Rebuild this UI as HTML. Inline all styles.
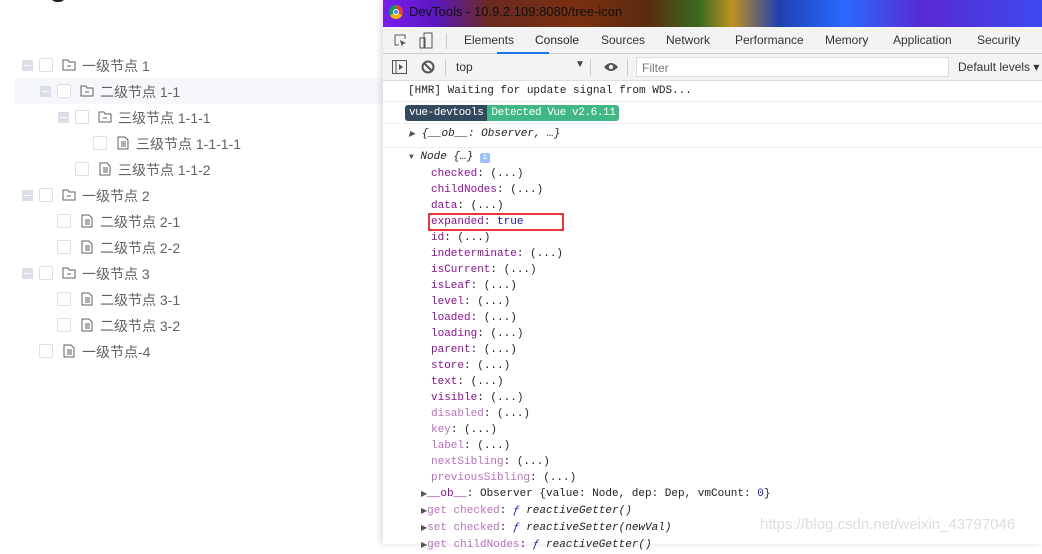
<!DOCTYPE html>
<html><head><meta charset="utf-8"><style>
*{margin:0;padding:0;box-sizing:border-box}
body{width:1042px;height:544px;overflow:hidden;background:#fff;position:relative;font-family:"Liberation Sans","Noto Sans CJK SC",sans-serif}
.row{position:absolute;left:15px;width:368px;height:26px;font-size:14px;color:#606266}
.row.hl{background:#f5f7fa}
.exp{position:absolute;top:8px;width:11px;height:11px;background:#dcdfe6}
.exp:after{content:"";position:absolute;left:2px;right:2px;top:5px;height:1px;background:#fff}
.cb{position:absolute;top:6px;width:14px;height:14px;border:1px solid #dcdfe6;border-radius:2px;background:#fff}
.ic{position:absolute;top:6px}
.tx{position:absolute;top:4px;white-space:nowrap}
#dt{position:absolute;left:383px;top:0;width:659px;height:544px;background:#fff;box-shadow:-3px 0 6px rgba(0,0,0,.12)}
#title{height:27px;background:linear-gradient(90deg,#7a1cf0 0%,#5a18c0 8%,#6a2a20 16%,#7a3010 30%,#5a2a10 40%,#3a6a20 48%,#c09020 53%,#2040b0 60%,#2a6aff 70%,#5a2ad0 82%,#3a4af0 100%);color:#111;font-size:13px;line-height:24px;padding-left:26px;position:relative}
#tabs{height:27px;background:#f3f3f3;border-bottom:1px solid #ccc;position:relative;font-size:12px;color:#333}
#tabs span{position:absolute;top:6px}
#cons{height:27px;background:#f3f3f3;border-bottom:1px solid #ddd;position:relative;font-size:12px;color:#333}
.ln{position:absolute;white-space:nowrap;font-family:"Liberation Mono",monospace;font-size:11px;color:#222}
.k{color:#881391}.kd{color:#b871bd}
.bd{display:inline-block;height:16px;line-height:16px;color:#fff;padding:0 4px;letter-spacing:-0.4px}
</style></head><body>
<div style="position:absolute;left:50px;top:-12px;width:16px;height:14px;border-radius:8px;background:#222"></div>

<div class="row" style="top:52px"><div class="exp" style="left:7px"></div><div class="cb" style="left:24px"></div>
<svg class="ic" style="left:47px" width="14" height="14" viewBox="0 0 14 14"><path d="M1 2h5l1 2h6v8H1z" fill="none" stroke="#606266"/><path d="M5 8h4" stroke="#606266"/></svg><span class="tx" style="left:67px">一级节点 1</span></div>
<div class="row hl" style="top:78px"><div class="exp" style="left:25px"></div><div class="cb" style="left:42px"></div>
<svg class="ic" style="left:65px" width="14" height="14" viewBox="0 0 14 14"><path d="M1 2h5l1 2h6v8H1z" fill="none" stroke="#606266"/><path d="M5 8h4" stroke="#606266"/></svg><span class="tx" style="left:85px">二级节点 1-1</span></div>
<div class="row" style="top:104px"><div class="exp" style="left:43px"></div><div class="cb" style="left:60px"></div>
<svg class="ic" style="left:83px" width="14" height="14" viewBox="0 0 14 14"><path d="M1 2h5l1 2h6v8H1z" fill="none" stroke="#606266"/><path d="M5 8h4" stroke="#606266"/></svg><span class="tx" style="left:103px">三级节点 1-1-1</span></div>
<div class="row" style="top:130px"><div class="cb" style="left:78px"></div>
<svg class="ic" style="left:101px" width="14" height="14" viewBox="0 0 14 14"><path d="M2 1h7l3 3v9H2z M5 6h5M5 8h5M5 10h5" fill="none" stroke="#606266"/></svg><span class="tx" style="left:121px">三级节点 1-1-1-1</span></div>
<div class="row" style="top:156px"><div class="cb" style="left:60px"></div>
<svg class="ic" style="left:83px" width="14" height="14" viewBox="0 0 14 14"><path d="M2 1h7l3 3v9H2z M5 6h5M5 8h5M5 10h5" fill="none" stroke="#606266"/></svg><span class="tx" style="left:103px">三级节点 1-1-2</span></div>
<div class="row" style="top:182px"><div class="exp" style="left:7px"></div><div class="cb" style="left:24px"></div>
<svg class="ic" style="left:47px" width="14" height="14" viewBox="0 0 14 14"><path d="M1 2h5l1 2h6v8H1z" fill="none" stroke="#606266"/><path d="M5 8h4" stroke="#606266"/></svg><span class="tx" style="left:67px">一级节点 2</span></div>
<div class="row" style="top:208px"><div class="cb" style="left:42px"></div>
<svg class="ic" style="left:65px" width="14" height="14" viewBox="0 0 14 14"><path d="M2 1h7l3 3v9H2z M5 6h5M5 8h5M5 10h5" fill="none" stroke="#606266"/></svg><span class="tx" style="left:85px">二级节点 2-1</span></div>
<div class="row" style="top:234px"><div class="cb" style="left:42px"></div>
<svg class="ic" style="left:65px" width="14" height="14" viewBox="0 0 14 14"><path d="M2 1h7l3 3v9H2z M5 6h5M5 8h5M5 10h5" fill="none" stroke="#606266"/></svg><span class="tx" style="left:85px">二级节点 2-2</span></div>
<div class="row" style="top:260px"><div class="exp" style="left:7px"></div><div class="cb" style="left:24px"></div>
<svg class="ic" style="left:47px" width="14" height="14" viewBox="0 0 14 14"><path d="M1 2h5l1 2h6v8H1z" fill="none" stroke="#606266"/><path d="M5 8h4" stroke="#606266"/></svg><span class="tx" style="left:67px">一级节点 3</span></div>
<div class="row" style="top:286px"><div class="cb" style="left:42px"></div>
<svg class="ic" style="left:65px" width="14" height="14" viewBox="0 0 14 14"><path d="M2 1h7l3 3v9H2z M5 6h5M5 8h5M5 10h5" fill="none" stroke="#606266"/></svg><span class="tx" style="left:85px">二级节点 3-1</span></div>
<div class="row" style="top:312px"><div class="cb" style="left:42px"></div>
<svg class="ic" style="left:65px" width="14" height="14" viewBox="0 0 14 14"><path d="M2 1h7l3 3v9H2z M5 6h5M5 8h5M5 10h5" fill="none" stroke="#606266"/></svg><span class="tx" style="left:85px">二级节点 3-2</span></div>
<div class="row" style="top:338px"><div class="cb" style="left:24px"></div>
<svg class="ic" style="left:47px" width="14" height="14" viewBox="0 0 14 14"><path d="M2 1h7l3 3v9H2z M5 6h5M5 8h5M5 10h5" fill="none" stroke="#606266"/></svg><span class="tx" style="left:67px">一级节点-4</span></div>

<div id="dt">
<div id="title"><div style="position:absolute;left:6px;top:5px;width:14px;height:14px;border-radius:7px;background:conic-gradient(#db4437 0 33%,#f4b400 0 66%,#0f9d58 0);"></div><div style="position:absolute;left:10px;top:9px;width:6px;height:6px;border-radius:3px;background:#4285f4;border:1px solid #fff"></div>DevTools - 10.9.2.109:8080/tree-icon</div>
<div id="tabs">
<svg style="position:absolute;left:10px;top:6px" width="16" height="16" viewBox="0 0 16 16"><path d="M2 2h10v4M2 2v10h4" fill="none" stroke="#555"/><path d="M7 7l6 3-3 1-1 3z" fill="#555"/></svg>
<svg style="position:absolute;left:36px;top:5px" width="14" height="17" viewBox="0 0 14 17"><rect x="5" y="1" width="8" height="15" fill="none" stroke="#555"/><rect x="1" y="6" width="5" height="10" fill="none" stroke="#555"/></svg>
<div style="position:absolute;left:63px;top:6px;width:1px;height:16px;background:#ccc"></div>
<span style="left:81px">Elements</span><span style="left:152px;color:#222">Console</span><span style="left:218px">Sources</span><span style="left:283px">Network</span><span style="left:352px">Performance</span><span style="left:442px">Memory</span><span style="left:510px">Application</span><span style="left:594px">Security</span>
<div style="position:absolute;left:114px;top:25px;width:52px;height:2px;background:#1a73e8"></div>
</div>
<div id="cons">
<svg style="position:absolute;left:9px;top:6px" width="15" height="14" viewBox="0 0 15 14"><rect x="0.5" y="0.5" width="14" height="13" fill="none" stroke="#555"/><path d="M4 1v12" stroke="#555"/><path d="M7 4l4 3-4 3z" fill="#555"/></svg>
<svg style="position:absolute;left:38px;top:6px" width="14" height="14" viewBox="0 0 14 14"><circle cx="7" cy="7" r="5.5" fill="none" stroke="#555" stroke-width="2"/><path d="M3 3l8 8" stroke="#555" stroke-width="2"/></svg>
<div style="position:absolute;left:62px;top:5px;width:1px;height:17px;background:#ccc"></div>
<span style="position:absolute;left:73px;top:6px">top</span><span style="position:absolute;left:192px;top:5px;font-size:10px;color:#444">▼</span>
<div style="position:absolute;left:207px;top:5px;width:1px;height:17px;background:#ccc"></div>
<svg style="position:absolute;left:220px;top:7px" width="16" height="12" viewBox="0 0 16 12"><path d="M1 6Q8-2 15 6Q8 14 1 6z" fill="#555"/><circle cx="8" cy="6" r="2.2" fill="#f3f3f3"/></svg>
<div style="position:absolute;left:244px;top:5px;width:1px;height:17px;background:#ccc"></div>
<div style="position:absolute;left:253px;top:3px;width:313px;height:20px;background:#fff;border:1px solid #ddd;padding:3px 5px;color:#777">Filter</div>
<span style="position:absolute;left:575px;top:6px">Default levels ▾</span>
</div>
<div style="position:absolute;left:0;top:101px;width:659px;height:1px;background:#eee"></div>
<div style="position:absolute;left:0;top:123px;width:659px;height:1px;background:#eee"></div>
<div style="position:absolute;left:0;top:147px;width:659px;height:1px;background:#eee"></div>
<div class="ln" style="left:25px;top:85px">[HMR] Waiting for update signal from WDS...</div>
<div class="ln" style="left:22px;top:105px;height:16px"><span class="bd" style="background:#35495e;border-radius:3px 0 0 3px">vue-devtools</span><span class="bd" style="background:#41b883;border-radius:0 3px 3px 0">Detected Vue v2.6.11</span></div>
<div class="ln" style="left:26px;top:128px;font-style:italic"><span style="font-size:8px;color:#555">▶</span> {__ob__: Observer, …}</div>
<div class="ln" style="left:26px;top:151px;font-style:italic"><span style="font-size:8px;color:#555">▼</span> Node {…} <span style="display:inline-block;width:10px;height:10px;background:#9cc0f5;color:#fff;font-size:8px;text-align:center;border-radius:2px;font-style:normal;line-height:10px">i</span></div>
<div class="ln" style="left:48px;top:166px;line-height:16px">
<span class="k">checked</span>: (...)<br><span class="k">childNodes</span>: (...)<br><span class="k">data</span>: (...)<br><span class="k">expanded</span>: <span style="color:#1a1aa6">true</span><br><span class="k">id</span>: (...)<br><span class="k">indeterminate</span>: (...)<br><span class="k">isCurrent</span>: (...)<br><span class="k">isLeaf</span>: (...)<br><span class="k">level</span>: (...)<br><span class="k">loaded</span>: (...)<br><span class="k">loading</span>: (...)<br><span class="k">parent</span>: (...)<br><span class="k">store</span>: (...)<br><span class="k">text</span>: (...)<br><span class="k">visible</span>: (...)<br><span class="kd">disabled</span>: (...)<br><span class="kd">key</span>: (...)<br><span class="kd">label</span>: (...)<br><span class="kd">nextSibling</span>: (...)<br><span class="kd">previousSibling</span>: (...)</div>
<div style="position:absolute;left:45px;top:213px;width:136px;height:18px;border:2px solid #e8383d"></div>
<div class="ln" style="left:38px;top:486px;line-height:16px">
<span style="font-size:8px;color:#555">▶</span><span class="k">__ob__</span>: Observer {value: Node, dep: Dep, vmCount: <span style="color:#1a1aa6">0</span>}<br>
<span style="font-size:8px;color:#555">▶</span><span class="kd">get checked</span>: <i style="color:#1a1aa6">ƒ</i> <i>reactiveGetter()</i><br>
<span style="font-size:8px;color:#555">▶</span><span class="kd">set checked</span>: <i style="color:#1a1aa6">ƒ</i> <i>reactiveSetter(newVal)</i><br>
<span style="font-size:8px;color:#555">▶</span><span class="kd">get childNodes</span>: <i style="color:#1a1aa6">ƒ</i> <i>reactiveGetter()</i></div>
<div style="position:absolute;left:377px;top:516px;font-size:15px;color:#ddd;white-space:nowrap">https://blog.csdn.net/weixin_43797046</div>
</div>
</body></html>
